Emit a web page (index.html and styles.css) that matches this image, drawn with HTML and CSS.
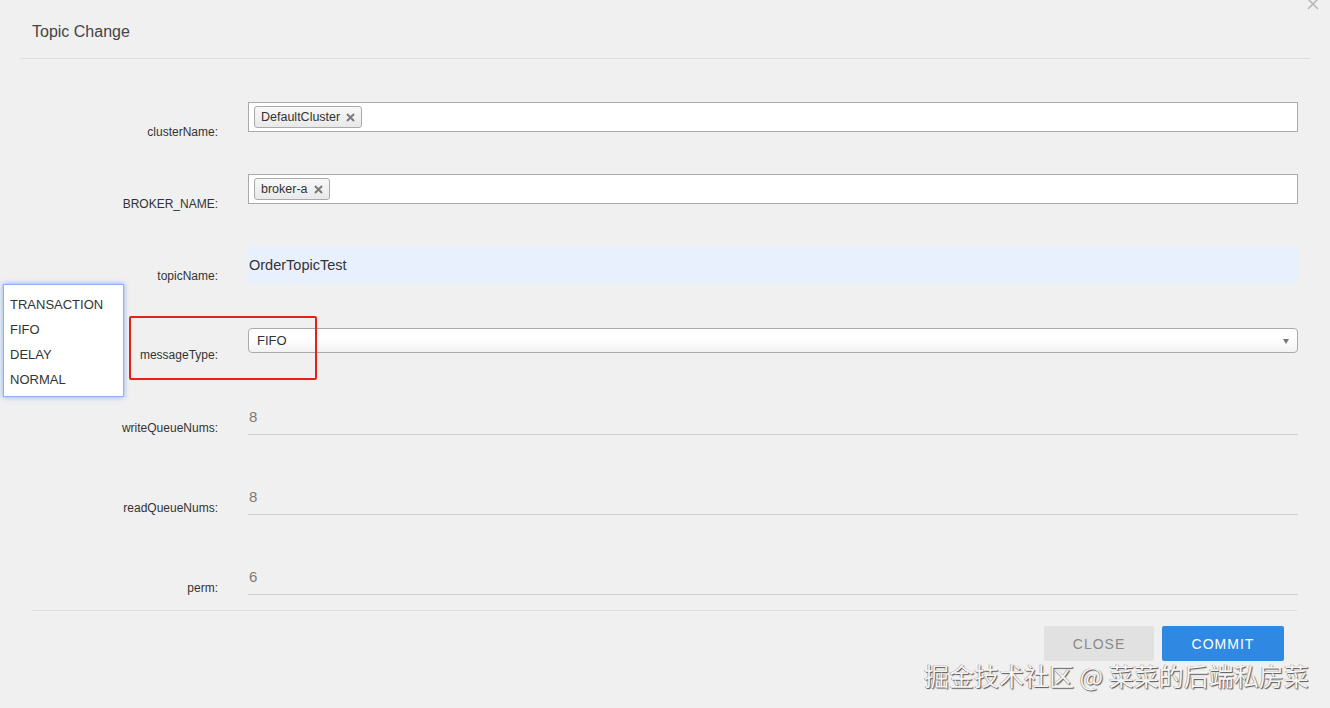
FILE: index.html
```html
<!DOCTYPE html>
<html>
<head>
<meta charset="utf-8">
<link rel="stylesheet" href="styles.css">
</head>
<body>
<div class="modal">
  <svg class="close-x" width="12" height="12" viewBox="0 0 12 12"><path d="M1 -1 L11 9 M11 -1 L1 9" stroke="#b8b8b8" stroke-width="1.6" fill="none"/></svg>
  <div class="header"><h1 class="title">Topic Change</h1></div>
  <div class="form">
    <div class="row r-tag">
      <label class="label">clusterName:</label>
      <div class="tagbox"><span class="tag">DefaultCluster<svg class="tag-x" width="9" height="9" viewBox="0 0 9 9"><path d="M1 1 L8 8 M8 1 L1 8" stroke="#7a7a7a" stroke-width="2" fill="none"/></svg></span></div>
    </div>
    <div class="row r-tag">
      <label class="label">BROKER_NAME:</label>
      <div class="tagbox"><span class="tag">broker-a<svg class="tag-x" width="9" height="9" viewBox="0 0 9 9"><path d="M1 1 L8 8 M8 1 L1 8" stroke="#7a7a7a" stroke-width="2" fill="none"/></svg></span></div>
    </div>
    <div class="row r-topic">
      <label class="label">topicName:</label>
      <div class="autofill">OrderTopicTest</div>
    </div>
    <div class="row r-select">
      <label class="label">messageType:</label>
      <div class="select">FIFO<span class="arrow"></span></div>
    </div>
    <div class="row r-num">
      <label class="label">writeQueueNums:</label>
      <div class="numfield">8</div>
    </div>
    <div class="row r-num">
      <label class="label">readQueueNums:</label>
      <div class="numfield">8</div>
    </div>
    <div class="row r-num last">
      <label class="label">perm:</label>
      <div class="numfield">6</div>
    </div>
  </div>
  <div class="footer">
    <button class="btn btn-close">CLOSE</button>
    <button class="btn btn-commit">COMMIT</button>
  </div>

  <ul class="dropdown">
    <li>TRANSACTION</li>
    <li>FIFO</li>
    <li>DELAY</li>
    <li>NORMAL</li>
  </ul>
  <div class="highlight"></div>
  <div class="watermark">掘金技术社区 @ 菜菜的后端私房菜</div>
</div>
</body>
</html>
```

FILE: styles.css
```css
html, body {
  margin: 0;
  padding: 0;
  background: #f0f0f0;
}
body {
  font-family: "Liberation Sans", Arial, sans-serif;
  color: #333;
}
.modal {
  position: relative;
  width: 1330px;
  height: 708px;
  overflow: hidden;
}
.close-x {
  position: absolute;
  left: 1307px;
  top: 0;
}
.header {
  margin: 0 20px;
  padding: 23px 0 17px 12px;
  border-bottom: 1px solid #dedede;
}
.title {
  margin: 0;
  font-size: 16px;
  line-height: 18px;
  font-weight: normal;
  color: #444;
}
.form {
  padding-top: 43px;
}
.row {
  display: grid;
  grid-template-columns: 218px 1050px;
  column-gap: 30px;
}
.label {
  align-self: end;
  text-align: right;
  font-size: 12px;
  line-height: 16px;
  color: #333;
}
.r-tag { height: 38px; margin-bottom: 34px; }
.r-topic { height: 38px; margin-bottom: 44px; }
.r-select { height: 35px; margin-bottom: 37px; }
.r-num { height: 36px; margin-bottom: 44px; }
.r-num.last { margin-bottom: 14px; }

.tagbox {
  align-self: start;
  background: #fff;
  border: 1px solid #aaa;
  padding: 3px 5px;
  box-sizing: border-box;
  height: 30px;
}
.tag {
  display: inline-flex;
  align-items: center;
  height: 20px;
  padding: 0 6px;
  border: 1px solid #aaa;
  border-radius: 3px;
  background: linear-gradient(#f8f8f8, #e9e9e9);
  font-size: 12.5px;
  color: #333;
}
.tag-x {
  margin-left: 6px;
  display: block;
}
.autofill {
  align-self: start;
  height: 38px;
  background: #e8f0fe;
  font-size: 14.5px;
  line-height: 38px;
  padding-left: 1px;
  color: #333;
  box-sizing: border-box;
}
.select {
  align-self: start;
  position: relative;
  height: 25px;
  box-sizing: border-box;
  border: 1px solid #aaa;
  border-radius: 4px;
  background: linear-gradient(#ffffff 40%, #f2f2f2 100%);
  padding-left: 8px;
  font-size: 13px;
  line-height: 23px;
  color: #333;
}
.arrow {
  position: absolute;
  right: 8px;
  top: 10px;
  width: 0;
  height: 0;
  border-left: 3.5px solid transparent;
  border-right: 3.5px solid transparent;
  border-top: 5px solid #777;
}
.numfield {
  align-self: start;
  height: 35px;
  box-sizing: border-box;
  border-bottom: 1px solid #cfcfcf;
  font-size: 15px;
  line-height: 33px;
  padding-left: 1px;
  color: #7a7a7a;
}
.footer {
  margin: 0 33px 0 32px;
  border-top: 1px solid #dedede;
  padding: 15px 13px 0 0;
  display: flex;
  justify-content: flex-end;
  gap: 8px;
}
.btn {
  height: 35px;
  border: none;
  border-radius: 2px;
  font-family: "Liberation Sans", Arial, sans-serif;
  font-size: 14px;
  letter-spacing: 1px;
  padding: 0;
}
.btn-close {
  width: 110px;
  background: #e1e1e1;
  color: #8a8a8a;
}
.btn-commit {
  width: 122px;
  background: #2f89e3;
  color: #fff;
}
.dropdown {
  position: absolute;
  left: 3px;
  top: 284px;
  width: 121px;
  box-sizing: border-box;
  margin: 0;
  padding: 7px 0 4px;
  list-style: none;
  background: #fff;
  border: 1px solid #8db4ee;
  box-shadow: 0 0 5px rgba(70, 140, 235, 0.7);
}
.dropdown li {
  padding-left: 6px;
  font-size: 13px;
  line-height: 25px;
  color: #333;
}
.highlight {
  position: absolute;
  left: 129px;
  top: 316px;
  width: 188px;
  height: 64px;
  box-sizing: border-box;
  border: 2px solid #e8201a;
  border-radius: 2px;
}
.watermark {
  position: absolute;
  left: 924px;
  top: 658px;
  font-family: "Noto Sans CJK SC", sans-serif;
  font-size: 25px;
  line-height: 34px;
  color: #f4f4f4;
  white-space: nowrap;
  text-shadow: 1px 1px 1px #555, -0.5px -0.5px 0 #888;
}
```
